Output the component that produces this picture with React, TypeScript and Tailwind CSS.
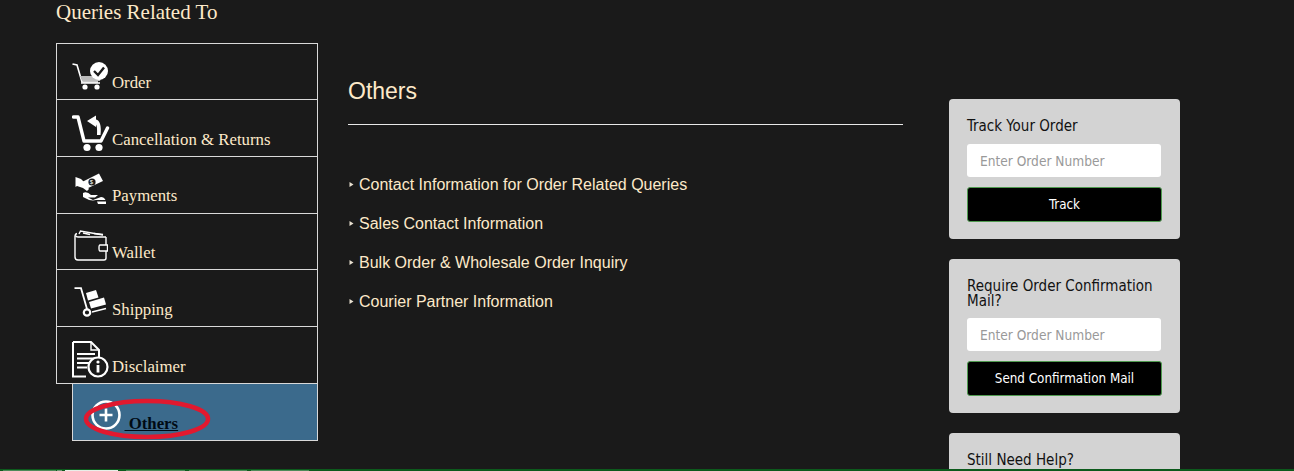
import React from "react";

const Cart = () => (
  <svg width="38" height="30" viewBox="0 0 38 30" className="block">
    <path d="M0.5 2 L5 3 L10 20 H26" fill="none" stroke="#fff" strokeWidth="1.6" />
    <path d="M8 14 H30 L28 19 H10 Z" fill="#bbb" />
    <path d="M9 21 H28" stroke="#fff" strokeWidth="1.5" />
    <circle cx="13" cy="25" r="2.6" fill="#fff" />
    <circle cx="25" cy="25" r="2.6" fill="#fff" />
    <circle cx="27" cy="9" r="9" fill="#fff" />
    <path d="M22 9 L26 13 L32 5.5" fill="none" stroke="#1a1a1a" strokeWidth="2.4" />
  </svg>
);
const CartReturn = () => (
  <svg width="38" height="37" viewBox="0 0 38 37" className="block">
    <path d="M1.5 2 H6 L12 26 H29 L35.5 13" fill="none" stroke="#fff" strokeWidth="3.4" strokeLinecap="round" strokeLinejoin="round" />
    <circle cx="15" cy="32.5" r="3.6" fill="#fff" />
    <circle cx="27" cy="32.5" r="3.6" fill="#fff" />
    <path d="M15 6 L24 0.5 L24 4.5 Q30 6 28.5 20 L25 20 Q25.5 12 24 9.5 L24 12 Z" fill="#fff" />
  </svg>
);
const Pay = () => (
  <svg width="32" height="31" viewBox="0 0 32 31" className="block">
    <path d="M0.5 4 V14 L2 13 L8 15 L12 18 L14 16 L10 10 L6 6 Z" fill="#fff" />
    <path d="M11 16 L7 9 L24 0.5 L28 8 Z" fill="#fff" />
    <circle cx="17" cy="9" r="3.6" fill="#1a1a1a" />
    <text x="14.8" y="11.2" fontSize="6" fill="#fff" fontFamily="Liberation Sans, sans-serif">$</text>
    <path d="M8 20 Q12 18 16 22 H23 L20 24.5 H13 L18 27 L26 24 Q29 24 30.5 27 H21 Q15 28.5 8 24 Z" fill="#fff" />
    <path d="M22 28.5 H31 V31 H23 Z" fill="#fff" />
  </svg>
);
const Wallet = () => (
  <svg width="34" height="31" viewBox="0 0 34 31" className="block">
    <path d="M32 7 V15 M32 21 V28 Q32 30 30 30 H4 Q1 30 1 27 V6 Q1 4 3 3.5" fill="none" stroke="#fff" strokeWidth="1.4" />
    <path d="M1.5 5.5 Q2 7 4 7 H32 M5 4 L6.5 1 L29 5" fill="none" stroke="#fff" strokeWidth="1.4" />
    <path d="M9 3 L16 4.5 M20 3.5 L29 4.5" stroke="#fff" strokeWidth="1.4" />
    <path d="M33.5 15 H26 Q25 15 25 18 Q25 21 26 21 H33.5 Z" fill="#1a1a1a" stroke="#fff" strokeWidth="1.4" />
  </svg>
);
const Ship = () => (
  <svg width="33" height="30" viewBox="0 0 33 30" className="block">
    <path d="M0.5 1.2 H7 L13 22" fill="none" stroke="#fff" strokeWidth="1.8" />
    <circle cx="13" cy="25.5" r="3.2" fill="#1a1a1a" stroke="#fff" strokeWidth="2.2" />
    <path d="M18 25 L32 21.5" stroke="#fff" strokeWidth="1.8" />
    <path d="M12 6 L22 3 L24.5 10.5 L14 13.5 Z" fill="#fff" />
    <path d="M15 15 L30 10.5 L32 17.5 L17 21.5 Z" fill="#fff" />
  </svg>
);
const Doc = () => (
  <svg width="37" height="37" viewBox="0 0 37 37" className="block">
    <path d="M1 1 H19 L27 9 V18 M14 35.5 H1 V1" fill="none" stroke="#fff" strokeWidth="2" />
    <path d="M19 1 V9 H27" fill="none" stroke="#fff" strokeWidth="1.4" />
    <path d="M5 13 H23 M5 17.5 H23 M5 22 H17 M5 26.5 H15" stroke="#fff" strokeWidth="1.8" />
    <circle cx="26" cy="26" r="9.5" fill="#1a1a1a" stroke="#fff" strokeWidth="2.2" />
    <rect x="24.6" y="24" width="2.8" height="7.5" fill="#fff" />
    <circle cx="26" cy="21" r="1.6" fill="#fff" />
  </svg>
);

const rows = [
  { label: "Order", icon: <Cart />, h: "h-[56px]", box: "mt-[18px] ml-0", text: "mt-[30px]" },
  { label: "Cancellation & Returns", icon: <CartReturn />, h: "h-[57px]", box: "mt-[15px] ml-0", text: "mt-[31px]" },
  { label: "Payments", icon: <Pay />, h: "h-[57px]", box: "mt-[16px] ml-[3px]", text: "mt-[30px]" },
  { label: "Wallet", icon: <Wallet />, h: "h-[56px]", box: "mt-[16px] ml-[2px]", text: "mt-[30px]" },
  { label: "Shipping", icon: <Ship />, h: "h-[57px]", box: "mt-[17px] ml-[2px]", text: "mt-[31px]" },
  { label: "Disclaimer", icon: <Doc />, h: "h-[57px]", box: "mt-[14px] ml-0", text: "mt-[31px]" },
];

const links = [
  "Contact Information for Order Related Queries",
  "Sales Contact Information",
  "Bulk Order & Wholesale Order Inquiry",
  "Courier Partner Information",
];

const sans = "font-['DejaVu_Sans_Condensed','DejaVu_Sans',sans-serif]";

function Form({ title, button, gap }: { title: string; button: string; gap: string }) {
  return (
    <div className="shrink-0 rounded-[4px] bg-[#d3d3d3] px-[18px] pt-[20px] pb-[17px]">
      <div className={`${sans} text-[15px] leading-[15px] text-[#111]`}>{title}</div>
      <input
        readOnly
        placeholder="Enter Order Number"
        className={`${sans} ${gap} block h-[33px] w-[194px] rounded-[3px] bg-white px-[13px] text-[13.6px] text-black placeholder:text-[#999] outline-none`}
      />
      <button className={`${sans} mt-[10px] block h-[35px] w-[195px] rounded-[3px] border border-[#4f9a4f] bg-black text-center text-[13.3px] text-white`}>
        {button}
      </button>
    </div>
  );
}

export default function App() {
  return (
    <div className="relative h-[471px] w-[1294px] overflow-hidden bg-[#1a1a1a]">
      <div className="flex items-start">
        <div className="ml-[56px] w-[262px] shrink-0">
          <h2 className="h-[43px] font-['Liberation_Serif',serif] text-[21px] leading-[24px] text-[#fde9c9]">
            Queries Related To
          </h2>
          <div className="border border-b-0 border-[#d9d9d9]">
            {rows.map((r) => (
              <div key={r.label} className={`flex ${r.h} items-start border-b border-[#d9d9d9] pl-[15px]`}>
                <div className="w-[40px] shrink-0">
                  <div className={r.box}>{r.icon}</div>
                </div>
                <span className={`${r.text} font-['Liberation_Serif',serif] text-[16.8px] leading-[18px] text-[#fde9c9]`}>
                  {r.label}
                </span>
              </div>
            ))}
          </div>
          <div className="relative ml-[16px] flex h-[57px] items-start border border-t-0 border-[#d9d9d9] bg-[#3b6a8c]">
            <svg width="30" height="30" viewBox="0 0 30 30" className="ml-[18px] mt-[16px] block">
              <circle cx="15" cy="15" r="13.5" fill="none" stroke="#fff" strokeWidth="2.6" />
              <path d="M8.5 15 H21.5 M15 8.5 V21.5" stroke="#fff" strokeWidth="2.6" />
            </svg>
            <span className="ml-[3.5px] mt-[31px] whitespace-pre font-['Liberation_Serif',serif] text-[16.8px] font-bold leading-[18px] text-[#000a14] underline">
              {" Others"}
            </span>
            <svg width="130" height="44" viewBox="0 0 130 44" className="absolute left-[10px] top-[13px]">
              <ellipse cx="64" cy="22" rx="61" ry="18" fill="none" stroke="#e1192f" strokeWidth="4.5" />
            </svg>
          </div>
        </div>

        <div className="ml-[30px] w-[555px] shrink-0 pt-[76px]">
          <h1 className="h-[49px] border-b border-[#e8e8e8] font-['Liberation_Sans',sans-serif] text-[23px] leading-[30px] text-[#fde9c9]">
            Others
          </h1>
          <ul className="mt-[49px] flex flex-col gap-[18px]">
            {links.map((l) => (
              <li key={l} className="flex items-center font-['Liberation_Sans',sans-serif] text-[16px] leading-[21px] text-[#fde9c9]">
                <svg width="11" height="7" viewBox="0 0 11 7" className="block shrink-0">
                  <path d="M1.5 1 L5.5 3.5 L1.5 6 Z" fill="#e8e0d0" />
                </svg>
                {l}
              </li>
            ))}
          </ul>
        </div>

        <div className="ml-[46px] flex w-[231px] shrink-0 flex-col gap-[20px] pt-[99px]">
          <Form title="Track Your Order" button="Track" gap="mt-[10px]" />
          <Form title="Require Order Confirmation Mail?" button="Send Confirmation Mail" gap="mt-[9px]" />
          <div className="h-[60px] shrink-0 rounded-[4px] bg-[#d3d3d3] px-[18px] pt-[19px]">
            <div className={`${sans} text-[15px] leading-[16px] text-[#111]`}>Still Need Help?</div>
          </div>
        </div>
      </div>

      <div className="absolute bottom-0 left-0 right-0 flex h-[2px] items-end bg-[#0c5a1c]">
        <div className="ml-[3px] h-[1px] w-[53px] bg-[#4d8a5a]" />
        <div className="ml-[1px] h-[1px] w-[5px] bg-[#6f9a78]" />
        <div className="ml-[3px] h-[1px] w-[53px] bg-[#e8eee8]" />
        <div className="ml-[8px] h-[1px] w-[59px] bg-[#4d8a5a]" />
        <div className="ml-[4px] h-[1px] w-[58px] bg-[#4d8a5a]" />
        <div className="ml-[4px] h-[1px] w-[58px] bg-[#4d8a5a]" />
      </div>
    </div>
  );
}
